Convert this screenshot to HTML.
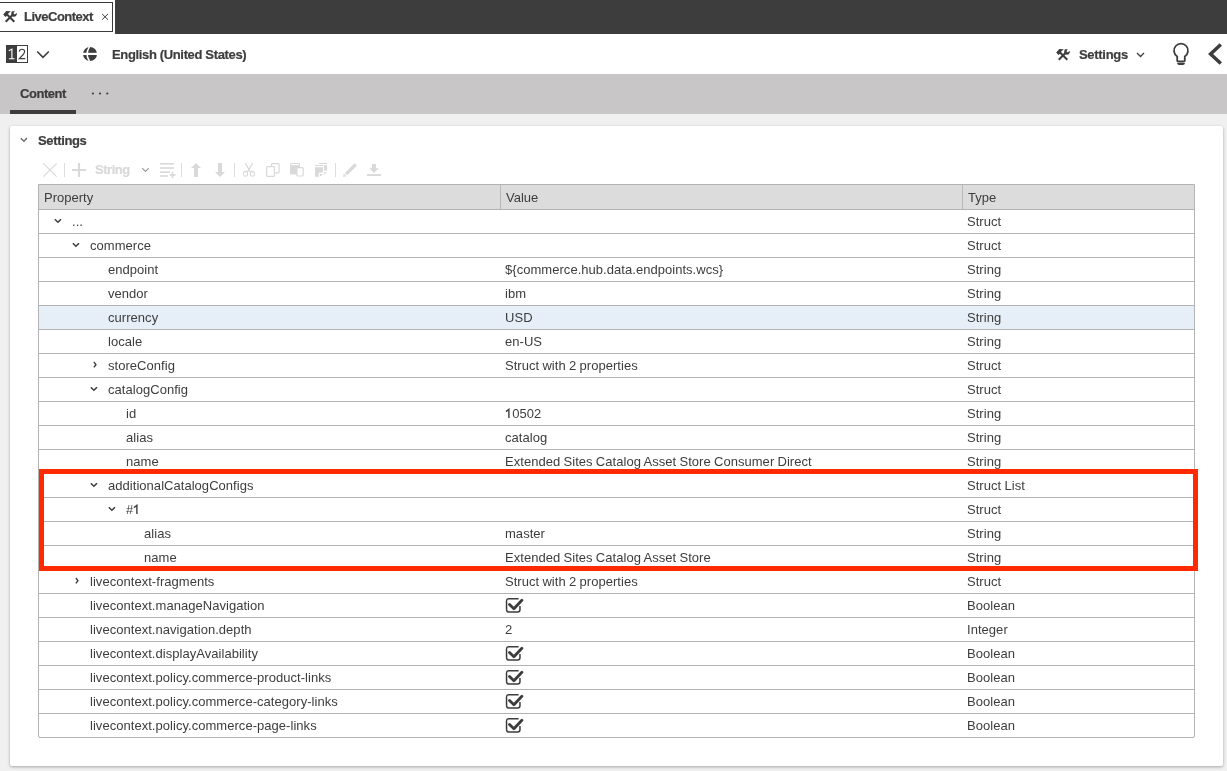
<!DOCTYPE html>
<html><head><meta charset="utf-8">
<style>
*{box-sizing:border-box;margin:0;padding:0}
html,body{width:1227px;height:771px;overflow:hidden;background:#fff;font-family:"Liberation Sans",sans-serif;color:#3d3d3d;font-size:13px}
.bold{-webkit-text-stroke:0.2px currentColor}
.abs{position:absolute}
svg{display:block}
#topbar{position:absolute;left:115px;top:0;width:1112px;height:34px;background:#3d3d3d}
#tab{position:absolute;left:-2px;top:2px;width:115px;height:30px;border:1px solid #3a3a3a;background:#fff}
#graybar{position:absolute;left:0;top:74px;width:1227px;height:40px;background:#c8c6c7}
#bg{position:absolute;left:0;top:114px;width:1227px;height:657px;background:#f0f0f0}
#card{position:absolute;left:10px;top:126px;width:1213px;height:640px;background:#fff;border-radius:2px;box-shadow:0 1px 3px rgba(0,0,0,.32)}
.bold{font-weight:bold}
#table{position:absolute;left:38px;top:184px;width:1157px;height:554px;border:1px solid #b3b3b3;border-radius:0 0 2px 2px;background:#fff}
#thead{position:absolute;left:0;top:0;width:1155px;height:25px;background:#dcdcdc;border-bottom:1px solid #b3b3b3}
.th{position:absolute;top:1px;line-height:24px;height:24px;white-space:nowrap}
.colsep{position:absolute;top:0;width:1px;height:24px;background:#b8b8b8}
.row{position:absolute;left:0;width:1155px;height:24px;border-bottom:1px solid #b3b3b3}
.row.sel{background:#e6eef8}
.row .t{position:absolute;top:0;line-height:23px;white-space:nowrap;letter-spacing:0.04px;word-spacing:-0.4px}
.cd{position:absolute;top:9px}
.cr{position:absolute;top:7px}
.ck{position:absolute;left:466px;top:3px}
#redbox{position:absolute;left:39px;top:469px;width:1159px;height:102px;border:5px solid #ff2a00}
.tb{position:absolute;top:163px}
.sep{position:absolute;top:163px;width:1px;height:14px;background:#dcdcdc}
</style></head><body><div id="root" style="position:absolute;left:0;top:0;width:1227px;height:771px;will-change:transform">
<div id="topbar"></div>
<div id="tab"></div>
<!-- tools icon tab -->
<svg class="abs" style="left:3px;top:11px" width="14" height="12" viewBox="0 0 14 12">
 <path d="M0.2 3.4 L3.3 0.1 L7.8 0.2 L5.0 2.8 L5.2 3.8 L2.4 5.9 Z" fill="#3d3d3d"/>
 <path d="M3.8 3.3 L11.3 10.8" stroke="#3d3d3d" stroke-width="2" stroke-linecap="butt"/>
 <path d="M2.7 10.8 L10 3.5" stroke="#3d3d3d" stroke-width="2"/>
 <path d="M8.9 0.2 L11.9 0.2 Q10.0 1.9 10.8 3.1 Q11.9 4.0 13.3 1.9 L13.9 2.4 Q13.8 5.4 11.0 5.7 Q8.2 5.6 8.2 2.8 Q8.3 1.3 8.9 0.2 Z" fill="#3d3d3d"/>
</svg>
<div class="abs bold" style="left:24px;top:9px;line-height:16px;letter-spacing:-0.5px">LiveContext</div>
<svg class="abs" style="left:101px;top:13px" width="8" height="8" viewBox="0 0 8 8"><path d="M1.1 0.9 L7 6.7 M7 0.9 L1.1 6.7" stroke="#3d3d3d" stroke-width="1"/></svg>

<!-- 1|2 icon -->
<svg class="abs" style="left:6px;top:45px" width="22" height="18" viewBox="0 0 22 18">
 <rect x="0" y="0" width="22" height="18" fill="#3d3d3d"/>
 <rect x="11" y="1" width="10" height="16" fill="#fff"/>
 <path d="M2.8 5.8 L5.9 4.1 V13.7 M2.9 13.7 H8.6" fill="none" stroke="#fff" stroke-width="1.15"/>
 <path d="M13.3 6.6 Q13.5 4.2 16 4.2 Q18.6 4.2 18.6 6.6 Q18.6 8.2 16.8 10 L13.3 13.6 H19.3" fill="none" stroke="#3d3d3d" stroke-width="1.15"/>
</svg>
<svg class="abs" style="left:36px;top:50px" width="14" height="9" viewBox="0 0 14 9"><path d="M1.2 1.5 L7 7.3 L12.8 1.5" fill="none" stroke="#3d3d3d" stroke-width="1.6"/></svg>
<!-- globe -->
<svg class="abs" style="left:83px;top:47px" width="14" height="14" viewBox="0 0 14 14">
 <circle cx="7" cy="7" r="7" fill="#3d3d3d"/>
 <rect x="0" y="5.8" width="14" height="2.2" fill="#fff"/>
 <path d="M6.6 -0.3 Q1.6 7 6.6 14.3" fill="none" stroke="#fff" stroke-width="1.5"/>
</svg>
<div class="abs bold" style="left:112px;top:47px;line-height:16px;letter-spacing:-0.35px">English (United States)</div>

<!-- right header -->
<svg class="abs" style="left:1056px;top:49px" width="14" height="12" viewBox="0 0 14 12">
 <path d="M0.2 3.4 L3.3 0.1 L7.8 0.2 L5.0 2.8 L5.2 3.8 L2.4 5.9 Z" fill="#3d3d3d"/>
 <path d="M3.8 3.3 L11.3 10.8" stroke="#3d3d3d" stroke-width="2" stroke-linecap="butt"/>
 <path d="M2.7 10.8 L10 3.5" stroke="#3d3d3d" stroke-width="2"/>
 <path d="M8.9 0.2 L11.9 0.2 Q10.0 1.9 10.8 3.1 Q11.9 4.0 13.3 1.9 L13.9 2.4 Q13.8 5.4 11.0 5.7 Q8.2 5.6 8.2 2.8 Q8.3 1.3 8.9 0.2 Z" fill="#3d3d3d"/>
</svg>
<div class="abs bold" style="left:1079px;top:47px;line-height:16px;letter-spacing:-0.3px">Settings</div>
<svg class="abs" style="left:1136px;top:52px" width="9" height="6" viewBox="0 0 9 6"><path d="M1 1 L4.5 4.5 L8 1" fill="none" stroke="#3d3d3d" stroke-width="1.3"/></svg>
<!-- bulb -->
<svg class="abs" style="left:1172px;top:42px" width="18" height="24" viewBox="0 0 18 24">
 <path d="M5.2 14.5 A7 7 0 1 1 12.8 14.5 L12.8 18.5 Q12.8 19.5 11.8 19.5 L6.2 19.5 Q5.2 19.5 5.2 18.5 Z" fill="none" stroke="#3d3d3d" stroke-width="1.8"/>
 <path d="M5 20.9 L13 20.9 Q12.6 22.9 11 22.9 L7 22.9 Q5.4 22.9 5 20.9 Z" fill="#3d3d3d"/>
</svg>
<!-- back arrow -->
<svg class="abs" style="left:1206px;top:42px" width="21" height="24" viewBox="0 0 21 24">
 <path d="M14.8 2.5 L4.6 12 L14.8 21.5" fill="none" stroke="#3d3d3d" stroke-width="3.5" stroke-linejoin="miter"/>
</svg>

<div id="graybar"></div>
<div class="abs bold" style="left:20px;top:86px;line-height:16px;letter-spacing:-0.45px">Content</div>
<div class="abs" style="left:10px;top:110px;width:66px;height:4px;background:#3d3d3d"></div>
<svg class="abs" style="left:90px;top:91px" width="20" height="5" viewBox="0 0 20 5">
 <circle cx="2.9" cy="2.5" r="1.1" fill="#3d3d3d"/><circle cx="10" cy="2.5" r="1.1" fill="#3d3d3d"/><circle cx="17.3" cy="2.5" r="1.1" fill="#3d3d3d"/>
</svg>

<div id="bg"></div>
<div id="card"></div>
<svg class="abs" style="left:20px;top:137px" width="8" height="6" viewBox="0 0 8 6"><path d="M0.85 1.2 L3.96 4.3 L6.97 1.1" fill="none" stroke="#6b6b6b" stroke-width="1.4"/></svg>
<div class="abs bold" style="left:38px;top:133px;line-height:16px;letter-spacing:-0.35px">Settings</div>

<!-- toolbar -->
<svg class="tb" style="left:43px" width="14" height="14" viewBox="0 0 14 14"><path d="M0.3 0.3 L13.7 13.7 M13.7 0.3 L0.3 13.7" stroke="#d9d9d9" stroke-width="1.1"/></svg>
<div class="sep" style="left:64px"></div>
<svg class="tb" style="left:72px" width="14" height="14" viewBox="0 0 14 14"><path d="M7 0 V14 M0 7 H14" stroke="#d9d9d9" stroke-width="2.2"/></svg>
<div class="abs bold" style="left:95px;top:162px;line-height:16px;color:#d9d9d9;letter-spacing:-0.45px">String</div>
<svg class="abs" style="left:141px;top:167px" width="9" height="6" viewBox="0 0 9 6"><path d="M1.2 1.2 L4.5 4.5 L7.8 1.2" fill="none" stroke="#9a9a9a" stroke-width="1.2"/></svg>
<svg class="tb" style="left:160px" width="16" height="16" viewBox="0 0 16 16">
 <rect x="0" y="0" width="14" height="1.6" fill="#d9d9d9"/>
 <rect x="0" y="4.2" width="14" height="1.6" fill="#d9d9d9"/>
 <rect x="0" y="8.4" width="10" height="1.6" fill="#d9d9d9"/>
 <rect x="0" y="12.2" width="8" height="1.6" fill="#d9d9d9"/>
 <path d="M12.5 8.8 V15 M9.6 11.9 H15.4" stroke="#d9d9d9" stroke-width="1.7"/>
</svg>
<div class="sep" style="left:181px"></div>
<svg class="tb" style="left:191px" width="10" height="14" viewBox="0 0 10 14"><path d="M5 0 L10 5 L7 5 L7 14 L3 14 L3 5 L0 5 Z" fill="#d9d9d9"/></svg>
<svg class="tb" style="left:215px" width="10" height="14" viewBox="0 0 10 14"><path d="M5 14 L10 9 L7 9 L7 0 L3 0 L3 9 L0 9 Z" fill="#d9d9d9"/></svg>
<div class="sep" style="left:234px"></div>
<svg class="tb" style="left:242px" width="14" height="14" viewBox="0 0 14 14">
 <path d="M3.3 0.3 L8.4 8.9 M10.6 0.3 L5.5 8.9" stroke="#d9d9d9" stroke-width="1.25" fill="none"/>
 <ellipse cx="3.5" cy="10.8" rx="2.1" ry="2.4" fill="none" stroke="#d9d9d9" stroke-width="1.1"/>
 <ellipse cx="10.4" cy="10.8" rx="2.1" ry="2.4" fill="none" stroke="#d9d9d9" stroke-width="1.1"/>
</svg>
<svg class="tb" style="left:266px" width="15" height="15" viewBox="0 0 15 15">
 <path d="M5.5 3.5 V1.6 Q5.5 0.6 6.5 0.6 H12.1 Q13.1 0.6 13.1 1.6 V8.9 Q13.1 9.9 12.1 9.9 H8.7" fill="none" stroke="#d9d9d9" stroke-width="1.2"/>
 <rect x="0.6" y="3.6" width="7.8" height="9.7" rx="0.9" fill="none" stroke="#d9d9d9" stroke-width="1.2"/>
</svg>
<svg class="tb" style="left:290px" width="15" height="15" viewBox="0 0 15 15">
 <rect x="0" y="0" width="10" height="11.5" rx="1" fill="#d9d9d9"/>
 <rect x="1" y="1" width="8" height="1.2" rx="0.5" fill="#fff"/>
 <rect x="6.9" y="4.6" width="6.3" height="8.4" rx="1" fill="#fff" stroke="#d9d9d9" stroke-width="1.2"/>
</svg>
<svg class="tb" style="left:315px" width="13" height="15" viewBox="0 0 13 15">
 <rect x="4" y="0" width="8" height="1" fill="#d9d9d9"/>
 <rect x="0" y="2" width="8" height="1" fill="#d9d9d9"/>
 <rect x="9.1" y="2.1" width="2.8" height="5.6" fill="#d9d9d9"/>
 <path d="M0 4.2 H8 V9.6 H3.8 V13.7 H0 Z" fill="#d9d9d9"/>
 <path d="M4.9 11.1 H7.9 L4.9 13.7 Z M9.1 9.1 H11.9 L9.1 11.7 Z" fill="#d9d9d9"/>
</svg>
<div class="sep" style="left:335px"></div>
<svg class="tb" style="left:343px" width="15" height="15" viewBox="0 0 15 15">
 <path d="M3.1 11.1 L12.8 1.4" stroke="#d9d9d9" stroke-width="3.3"/>
 <path d="M0 14 L0.8 10.6 L3.4 13.2 Z" fill="#d9d9d9"/>
</svg>
<svg class="tb" style="left:367px;top:164px" width="14" height="13" viewBox="0 0 14 13">
 <path d="M5 0 H8.9 V4.2 H11.9 L7 8.9 L2.1 4.2 H5 Z" fill="#d9d9d9"/>
 <rect x="0" y="10.1" width="14" height="1.9" fill="#d9d9d9"/>
</svg>

<div id="table">
<div id="thead">
<span class="th" style="left:5px">Property</span>
<span class="colsep" style="left:461px"></span>
<span class="th" style="left:467px">Value</span>
<span class="colsep" style="left:923px"></span>
<span class="th" style="left:929px">Type</span>
</div>
<div class="row" style="top:25px"><span class="cd" style="left:15px"><svg width="8" height="5" viewBox="0 0 8 5"><path d="M0.8 0.3 L3.9 3.3 L7 0.2" fill="none" stroke="#3d3d3d" stroke-width="1.5"/></svg></span><span class="t" style="left:33px">...</span><span class="t" style="left:928px">Struct</span></div>
<div class="row" style="top:49px"><span class="cd" style="left:33px"><svg width="8" height="5" viewBox="0 0 8 5"><path d="M0.8 0.3 L3.9 3.3 L7 0.2" fill="none" stroke="#3d3d3d" stroke-width="1.5"/></svg></span><span class="t" style="left:51px">commerce</span><span class="t" style="left:928px">Struct</span></div>
<div class="row" style="top:73px"><span class="t" style="left:69px">endpoint</span><span class="t" style="left:466px">${commerce.hub.data.endpoints.wcs}</span><span class="t" style="left:928px">String</span></div>
<div class="row" style="top:97px"><span class="t" style="left:69px">vendor</span><span class="t" style="left:466px">ibm</span><span class="t" style="left:928px">String</span></div>
<div class="row sel" style="top:121px"><span class="t" style="left:69px">currency</span><span class="t" style="left:466px">USD</span><span class="t" style="left:928px">String</span></div>
<div class="row" style="top:145px"><span class="t" style="left:69px">locale</span><span class="t" style="left:466px">en-US</span><span class="t" style="left:928px">String</span></div>
<div class="row" style="top:169px"><span class="cr" style="left:54px"><svg width="5" height="8" viewBox="0 0 5 8"><path d="M0.9 1.0 L2.9 3.65 L0.9 6.3" fill="none" stroke="#3d3d3d" stroke-width="1.4"/></svg></span><span class="t" style="left:69px">storeConfig</span><span class="t" style="left:466px">Struct with 2 properties</span><span class="t" style="left:928px">Struct</span></div>
<div class="row" style="top:193px"><span class="cd" style="left:51px"><svg width="8" height="5" viewBox="0 0 8 5"><path d="M0.8 0.3 L3.9 3.3 L7 0.2" fill="none" stroke="#3d3d3d" stroke-width="1.5"/></svg></span><span class="t" style="left:69px">catalogConfig</span><span class="t" style="left:928px">Struct</span></div>
<div class="row" style="top:217px"><span class="t" style="left:87px">id</span><span class="t" style="left:466px"><svg width="7.2" height="10" viewBox="0 0 7.2 10" style="display:inline-block;vertical-align:baseline"><path d="M1.0 3.6 L3.9 1.3 V10" fill="none" stroke="#3d3d3d" stroke-width="1.4"/></svg>0502</span><span class="t" style="left:928px">String</span></div>
<div class="row" style="top:241px"><span class="t" style="left:87px">alias</span><span class="t" style="left:466px">catalog</span><span class="t" style="left:928px">String</span></div>
<div class="row" style="top:265px"><span class="t" style="left:87px">name</span><span class="t" style="left:466px">Extended Sites Catalog Asset Store Consumer Direct</span><span class="t" style="left:928px">String</span></div>
<div class="row" style="top:289px"><span class="cd" style="left:51px"><svg width="8" height="5" viewBox="0 0 8 5"><path d="M0.8 0.3 L3.9 3.3 L7 0.2" fill="none" stroke="#3d3d3d" stroke-width="1.5"/></svg></span><span class="t" style="left:69px">additionalCatalogConfigs</span><span class="t" style="left:928px">Struct List</span></div>
<div class="row" style="top:313px"><span class="cd" style="left:69px"><svg width="8" height="5" viewBox="0 0 8 5"><path d="M0.8 0.3 L3.9 3.3 L7 0.2" fill="none" stroke="#3d3d3d" stroke-width="1.5"/></svg></span><span class="t" style="left:87px">#<svg width="7.2" height="10" viewBox="0 0 7.2 10" style="display:inline-block;vertical-align:baseline"><path d="M1.0 3.6 L3.9 1.3 V10" fill="none" stroke="#3d3d3d" stroke-width="1.4"/></svg></span><span class="t" style="left:928px">Struct</span></div>
<div class="row" style="top:337px"><span class="t" style="left:105px">alias</span><span class="t" style="left:466px">master</span><span class="t" style="left:928px">String</span></div>
<div class="row" style="top:361px"><span class="t" style="left:105px">name</span><span class="t" style="left:466px">Extended Sites Catalog Asset Store</span><span class="t" style="left:928px">String</span></div>
<div class="row" style="top:385px"><span class="cr" style="left:36px"><svg width="5" height="8" viewBox="0 0 5 8"><path d="M0.9 1.0 L2.9 3.65 L0.9 6.3" fill="none" stroke="#3d3d3d" stroke-width="1.4"/></svg></span><span class="t" style="left:51px">livecontext-fragments</span><span class="t" style="left:466px">Struct with 2 properties</span><span class="t" style="left:928px">Struct</span></div>
<div class="row" style="top:409px"><span class="t" style="left:51px">livecontext.manageNavigation</span><span class="ck"><svg width="20" height="18" viewBox="0 0 20 18"><path d="M13.6 1.75 H3.75 Q1.55 1.75 1.55 3.95 V12.85 Q1.55 15.05 3.75 15.05 H12.75 Q14.95 15.05 14.95 12.85 V9" fill="none" stroke="#3b3b3b" stroke-width="1.5"/><path d="M4.5 7.4 L8.9 11.8 L16.9 3.2" fill="none" stroke="#3b3b3b" stroke-width="2.8" stroke-linecap="round" stroke-linejoin="round"/></svg></span><span class="t" style="left:928px">Boolean</span></div>
<div class="row" style="top:433px"><span class="t" style="left:51px">livecontext.navigation.depth</span><span class="t" style="left:466px">2</span><span class="t" style="left:928px">Integer</span></div>
<div class="row" style="top:457px"><span class="t" style="left:51px">livecontext.displayAvailability</span><span class="ck"><svg width="20" height="18" viewBox="0 0 20 18"><path d="M13.6 1.75 H3.75 Q1.55 1.75 1.55 3.95 V12.85 Q1.55 15.05 3.75 15.05 H12.75 Q14.95 15.05 14.95 12.85 V9" fill="none" stroke="#3b3b3b" stroke-width="1.5"/><path d="M4.5 7.4 L8.9 11.8 L16.9 3.2" fill="none" stroke="#3b3b3b" stroke-width="2.8" stroke-linecap="round" stroke-linejoin="round"/></svg></span><span class="t" style="left:928px">Boolean</span></div>
<div class="row" style="top:481px"><span class="t" style="left:51px">livecontext.policy.commerce-product-links</span><span class="ck"><svg width="20" height="18" viewBox="0 0 20 18"><path d="M13.6 1.75 H3.75 Q1.55 1.75 1.55 3.95 V12.85 Q1.55 15.05 3.75 15.05 H12.75 Q14.95 15.05 14.95 12.85 V9" fill="none" stroke="#3b3b3b" stroke-width="1.5"/><path d="M4.5 7.4 L8.9 11.8 L16.9 3.2" fill="none" stroke="#3b3b3b" stroke-width="2.8" stroke-linecap="round" stroke-linejoin="round"/></svg></span><span class="t" style="left:928px">Boolean</span></div>
<div class="row" style="top:505px"><span class="t" style="left:51px">livecontext.policy.commerce-category-links</span><span class="ck"><svg width="20" height="18" viewBox="0 0 20 18"><path d="M13.6 1.75 H3.75 Q1.55 1.75 1.55 3.95 V12.85 Q1.55 15.05 3.75 15.05 H12.75 Q14.95 15.05 14.95 12.85 V9" fill="none" stroke="#3b3b3b" stroke-width="1.5"/><path d="M4.5 7.4 L8.9 11.8 L16.9 3.2" fill="none" stroke="#3b3b3b" stroke-width="2.8" stroke-linecap="round" stroke-linejoin="round"/></svg></span><span class="t" style="left:928px">Boolean</span></div>
<div class="row" style="top:529px"><span class="t" style="left:51px">livecontext.policy.commerce-page-links</span><span class="ck"><svg width="20" height="18" viewBox="0 0 20 18"><path d="M13.6 1.75 H3.75 Q1.55 1.75 1.55 3.95 V12.85 Q1.55 15.05 3.75 15.05 H12.75 Q14.95 15.05 14.95 12.85 V9" fill="none" stroke="#3b3b3b" stroke-width="1.5"/><path d="M4.5 7.4 L8.9 11.8 L16.9 3.2" fill="none" stroke="#3b3b3b" stroke-width="2.8" stroke-linecap="round" stroke-linejoin="round"/></svg></span><span class="t" style="left:928px">Boolean</span></div>
</div>
<div id="redbox"></div>
</div></body></html>
